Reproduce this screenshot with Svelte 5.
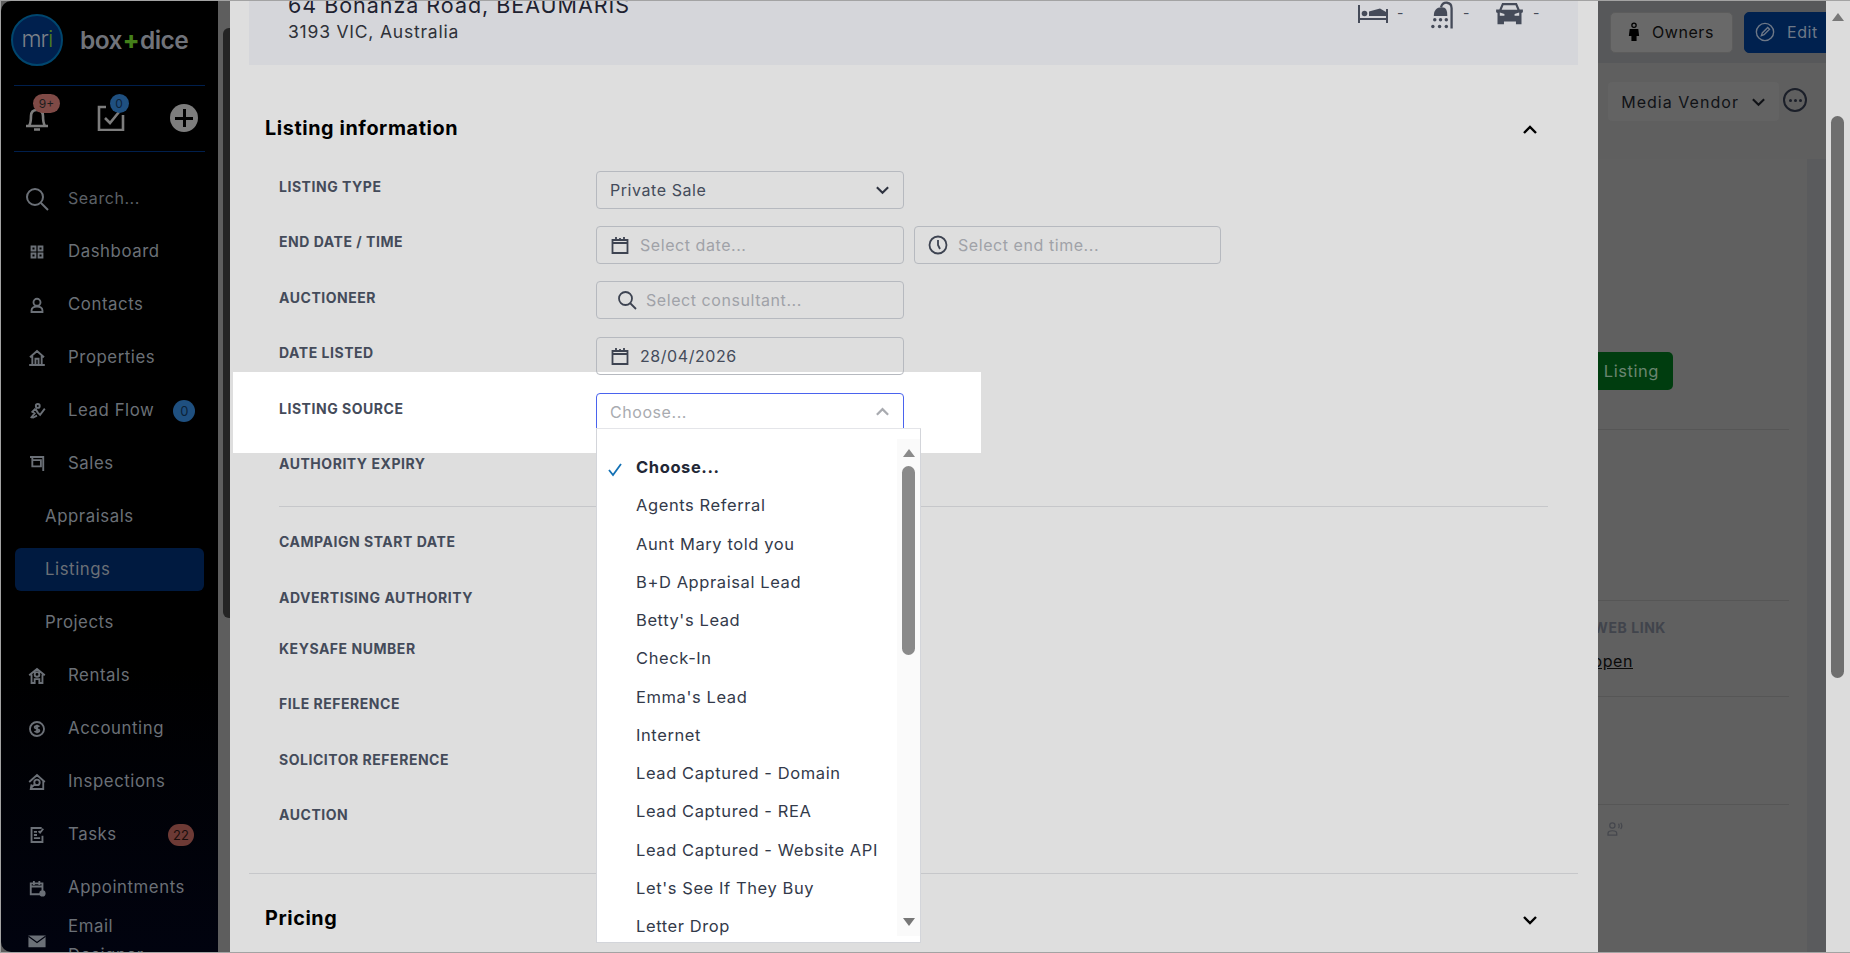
<script lang="ts">
	const nav = [
		{ label: 'Dashboard', d: 'M5 5h5v5H5zM14 5h5v5h-5zM5 14h5v5H5zM14 14h5v5h-5z' },
		{ label: 'Contacts', d: 'M12 4a4.5 4.5 0 1 0 0 9 4.5 4.5 0 0 0 0-9zM5 21v-2c0-3 3-5 7-5s7 2 7 5v2z' },
		{ label: 'Properties', d: 'M3 11l9-8 9 8M6 9.500V21h12V9.500M10 21v-8h4v8M2 21h20' },
		{ label: 'Lead Flow', d: 'M13 3a2.500 2.500 0 1 0 0 5 2.500 2.500 0 0 0 0-5zM10 9l-4 4 3 2-5 6M10 9l3 5 3 3 6-8M6 21l6-3', badge: '0', tone: 'blue' },
		{ label: 'Sales', d: 'M3 3h17v18M6 7h11v8H6zM6 7V4', wide: true },
		{ label: 'Appraisals', sub: true },
		{ label: 'Listings', sub: true, active: true },
		{ label: 'Projects', sub: true },
		{ label: 'Rentals', d: 'M2 11l10-8 10 8M5 10v11h4v-5h6v5h4V10M12 7a3 3 0 1 0 0 6 3 3 0 0 0 0-6z' },
		{ label: 'Accounting', d: 'M12 3a9 9 0 1 0 0 18 9 9 0 0 0 0-18zM15 9c-1-1.500-6-1.500-6 .8 0 2.700 6 1.400 6 4.200 0 2.300-5 2.300-6 .5M12 6.500v11' },
		{ label: 'Inspections', d: 'M2 12l10-9 10 9M5 15l-1 6h16v-11M12 9a3.500 3.500 0 1 0 0 7 3.500 3.500 0 0 0 0-7zM9 15l-4 4' },
		{ label: 'Tasks', d: 'M18 3H5v18h14v-8M8 8h4M8 12h4M8 16h8M14 7l2 2 4-5', badge: '22', tone: 'red' },
		{ label: 'Appointments', d: 'M4 6h15v14H4zM4 10h15M8 3v5M15 3v5', dot: true },
		{ label: 'Email Designer', mail: true }
	];
	const options = [
		'Agents Referral', 'Aunt Mary told you', 'B+D Appraisal Lead', "Betty's Lead", 'Check-In', "Emma's Lead",
		'Internet', 'Lead Captured - Domain', 'Lead Captured - REA', 'Lead Captured - Website API', "Let's See If They Buy", 'Letter Drop'
	];
	const lowerRows = ['Campaign start date', 'Advertising authority', 'Keysafe number', 'File reference', 'Solicitor reference', 'Auction'];
</script>

{#snippet calendar()}
	<svg class="field-icon" viewBox="0 0 20 20"><path d="M2.500 5h15v13h-15zM2.500 8h15M6 2v4M14 2v4M10 3v2" /></svg>
{/snippet}

<div class="app">
	<aside class="side">
		<div class="rail">
			<div class="brand">
				<div class="logo">m<span class="logo-r">r</span><span class="logo-i">i</span></div>
				<div class="word">box<b>+</b>dice</div>
			</div>
			<div class="quick">
				<div class="quick-item">
					<svg viewBox="0 0 28 28"><path d="M3 23h22M6 23c2-3 2-5 2-10 0-4 2-6 6-6s6 2 6 6c0 5 0 7 2 10M11 26.500h6" /></svg>
					<span class="q-badge red">9+</span>
				</div>
				<div class="quick-item task">
					<svg viewBox="0 0 28 28"><path d="M9 4H2v23h24V12M8 15l5 5 9-11" /></svg>
					<span class="q-badge blue">0</span>
				</div>
				<div class="plus"><span></span></div>
			</div>
			<nav class="nav">
				<div class="item search">
					<svg viewBox="0 0 24 24"><circle cx="10" cy="10" r="8" /><path d="M16 16l7 7" /></svg>
					<span class="muted">Search...</span>
				</div>
				{#each nav as n}
					<div class="item" class:sub={n.sub} class:active={n.active} class:mail={n.mail}>
						{#if n.d}
							<svg viewBox="0 0 24 24"><path d={n.d} />{#if n.dot}<circle class="solid" cx="19" cy="19" r="4" />{/if}</svg>
						{:else if n.mail}
							<svg viewBox="0 0 24 24"><path class="solid" d="M1 5h22v15H1z" /><path class="cut" d="M1 6l11 8 11-8" /></svg>
						{/if}
						<span class="label">{n.label}</span>
						{#if n.badge}<span class="badge {n.tone}">{n.badge}</span>{/if}
					</div>
				{/each}
			</nav>
		</div>
		<div class="side-scroll"><i></i></div>
	</aside>

	<main class="page">
		<header class="topbar">
			<button class="btn owners">
				<svg viewBox="0 0 14 24"><circle cx="7" cy="3.500" r="2.500" fill="none" stroke="#000" stroke-width="1.500" /><path d="M2 8h10l1 8h-3v6H4v-6H1z" fill="#000" /></svg>
				Owners
			</button>
			<button class="btn edit">
				<svg viewBox="0 0 22 22"><circle cx="11" cy="11" r="9.500" /><path d="M7 15l1-3 6-6 2 2-6 6z" /></svg>
				Edit
			</button>
		</header>
		<div class="tools">
			<div class="vendor">Media Vendor <svg viewBox="0 0 16 10"><path d="M2 2l6 6 6-6" /></svg></div>
			<div class="dots"><i></i><i></i><i></i></div>
		</div>
		<div class="gutter">
			<div class="sheet">
				<div class="listing-btn">Listing</div>
				<div class="web">
					<div class="web-title">WEB LINK</div>
					<div class="open">open</div>
				</div>
				<div class="gap-one"></div>
				<div class="sheet-icons">
					<svg viewBox="0 0 16 16"><circle cx="8" cy="8" r="6.500" /></svg>
					<svg viewBox="0 0 18 16"><circle cx="6" cy="4" r="3" /><path d="M1 15v-2c0-2 2-3 5-3s5 1 5 3v2zM13 2c1 1 1 4 0 5M15.500 1c1.500 2 1.500 5 0 7" /></svg>
				</div>
			</div>
		</div>
	</main>
	<div class="page-scroll"><span class="up"></span><i></i></div>

	<section class="modal">
		<div class="spot"></div>
		<div class="summary">
			<div>
				<div class="street">64 Bonanza Road, BEAUMARIS</div>
				<div class="suburb">3193 VIC, Australia</div>
			</div>
			<div class="specs">
				<svg class="bed" viewBox="0 0 30 18"><path class="fill" d="M0 0h2v18H0zM28 4h2v14h-2zM1 13h28v2H1zM11 6.500l11-3 6 3.500v4H11z" /><circle class="fill" cx="6.500" cy="8.500" r="2.800" /></svg><span>-</span>
				<svg class="shower" viewBox="0 0 26 28"><path class="line" d="M23.500 28V7c0-7-9-8-11-1" /><path class="fill" d="M5 15c0-6 3-9 8-9s6 3 6 9z" /><g class="fill"><circle cx="6" cy="19" r="1.800" /><circle cx="12" cy="19" r="1.800" /><circle cx="18" cy="19" r="1.800" /><circle cx="4" cy="26" r="1.800" /><circle cx="11" cy="26" r="1.800" /><circle cx="18" cy="26" r="1.800" /></g></svg><span>-</span>
				<svg class="car" viewBox="0 0 30 26"><path class="fill" d="M7 1h16l3 7h3.500v3l-1.500 1v12h-6v-3H9v3H2V12L.5 11V8H4zM8.500 3.500L6.500 8.500h17l-2-5zM4.500 11.500v3.500h5v-2zM25.500 11.500v3.500h-5v-2z" fill-rule="evenodd" /></svg><span>-</span>
			</div>
		</div>

		<div class="section-head first">
			<h2>Listing information</h2>
			<svg viewBox="0 0 16 10"><path d="M2 8l6-6 6 6" /></svg>
		</div>

		<div class="rows">
			<div class="row"><span class="key">Listing type</span>
				<div class="field"><span class="val">Private Sale</span><svg class="caret" viewBox="0 0 16 10"><path d="M2 2l6 6 6-6" /></svg></div>
			</div>
			<div class="row"><span class="key">End date / time</span>
				<div class="field">{@render calendar()}<span class="hint">Select date...</span></div>
				<div class="field end">
					<svg class="field-icon" viewBox="0 0 20 20"><circle cx="10" cy="10" r="8.500" /><path d="M10 5v5l2 4" /></svg>
					<span class="hint">Select end time...</span>
				</div>
			</div>
			<div class="row"><span class="key">Auctioneer</span>
				<div class="field seek">
					<svg class="field-icon" viewBox="0 0 20 20"><circle cx="8.500" cy="8.500" r="6.500" /><path d="M13 13l6 6" /></svg>
					<span class="hint">Select consultant...</span>
				</div>
			</div>
			<div class="row"><span class="key">Date listed</span>
				<div class="field">{@render calendar()}<span class="val">28/04/2026</span></div>
			</div>
			<div class="row"><span class="key">Listing source</span>
				<div class="field focus"><span class="hint">Choose...</span><svg class="caret pale" viewBox="0 0 16 10"><path d="M2 8l6-6 6 6" /></svg></div>
			</div>
			<div class="row"><span class="key">Authority expiry</span></div>
			<hr />
			{#each lowerRows as k, i}
				<div class="row" class:short={i === 1}><span class="key">{k}</span></div>
			{/each}
		</div>

		<div class="section-head pricing">
			<h2>Pricing</h2>
			<svg viewBox="0 0 16 10"><path d="M2 2l6 6 6-6" /></svg>
		</div>

		<div class="menu">
			<ul>
				<li class="picked">
					<svg viewBox="0 0 16 16"><path d="M2 9l4 5 8-11" /></svg>
					Choose...
				</li>
				{#each options as o}<li>{o}</li>{/each}
			</ul>
			<div class="menu-scroll">
				<span class="up"></span>
				<i></i>
				<span class="down"></span>
			</div>
		</div>
	</section>
</div>

<style>
:global(body) { margin: 0; background: #dcdcdc; }
.app {
	position: relative;
	display: flex;
	width: 1850px;
	height: 953px;
	overflow: hidden;
	font-family: Inter, "Open Sans", sans-serif;
	font-size: 16px;
	letter-spacing: 0.035em;
	box-sizing: border-box;
	border: 1px solid #a3a3a3;
	border-width: 1px 0 1px 1px;
}
svg { fill: none; stroke: currentColor; stroke-width: 2; flex-shrink: 0; }
button { font: inherit; letter-spacing: inherit; }

/* sidebar */
.side { display: flex; width: 229px; flex-shrink: 0; background: #5e5e5e; }
.rail {
	width: 217px;
	background: linear-gradient(#000 70%, #01030f);
	border-radius: 10px 0 0 10px;
	color: #6b7077;
	overflow: hidden;
}
.side-scroll { flex: 1; padding: 27px 0 0 5px; }
.side-scroll i { display: block; height: 590px; background: #242424; border-radius: 6px 0 0 6px; }
.brand {
	display: flex;
	align-items: center;
	gap: 17px;
	height: 85px;
	margin: 0 13px;
	padding-bottom: 7px;
	box-sizing: border-box;
	border-bottom: 1px solid #001f4d;
}
.logo {
	width: 52px;
	height: 52px;
	border-radius: 50%;
	background: #00204e;
	border: 2px solid #00466e;
	box-sizing: border-box;
	margin-left: -3px;
	color: #7b8088;
	font-size: 23px;
	font-weight: 300;
	letter-spacing: -1px;
	line-height: 46px;
	text-align: center;
	flex-shrink: 0;
}
.logo-i { color: #4f7f1e; }
.word { color: #70737a; font-size: 24.500px; font-weight: 600; letter-spacing: -0.6px; white-space: nowrap; }
.word b { color: #44801a; font-weight: 800; margin: 0 1px; }
.quick {
	display: flex;
	align-items: center;
	justify-content: space-between;
	height: 65px;
	margin: 0 13px;
	padding: 0 7px 0 9px;
	border-bottom: 1px solid #001f4d;
}
.quick-item { position: relative; width: 28px; height: 28px; color: #7d7d7d; margin-top: -3px; }
.quick-item svg { width: 28px; height: 28px; display: block; stroke-width: 2.600; }
.q-badge {
	position: absolute;
	top: -9px;
	height: 19px;
	line-height: 19px;
	text-align: center;
	font-size: 12px;
	letter-spacing: 0;
	color: #1d1d1d;
}
.q-badge.red { left: 10px; width: 27px; border-radius: 10px; background: #7f4a46; }
.q-badge.blue { left: 13px; width: 19px; border-radius: 50%; background: #1f5080; color: #0e2238; }
.plus { position: relative; width: 28px; height: 28px; border-radius: 50%; background: #7d7d7d; margin-top: -2px; }
.plus::before, .plus span {
	content: '';
	position: absolute;
	left: 13px;
	top: 5px;
	width: 3px;
	height: 18px;
	background: #000;
}
.plus span { left: 5px; top: 13px; width: 18px; height: 3px; }
.nav { padding: 20px 14px 0 13px; font-size: 16.800px; }
.item {
	display: flex;
	align-items: center;
	gap: 19px;
	min-height: 53px;
	padding: 0 10px 0 11px;
	line-height: 29px;
	box-sizing: border-box;
}
.item svg { width: 24px; height: 24px; stroke-width: 2.400; transform: scale(0.78); }
.item.search svg { transform: none; stroke-width: 2; }
.item .solid { fill: currentColor; stroke: none; }
.item .cut { stroke: #01030f; stroke-width: 1.500; }
.item .label { flex: 1; white-space: nowrap; }
.mail { margin-top: -2px; }
.item.mail .label { max-width: 90px; white-space: normal; }
.muted { color: #5c6067; font-size: 16px; }
.sub { padding-left: 31px; }
.active { min-height: 43px; margin: 5px 0 5px 1px; padding-left: 30px; background: #001a40; border-radius: 6px; }
.badge {
	min-width: 22px;
	height: 22px;
	border-radius: 11px;
	text-align: center;
	font-size: 13px;
	letter-spacing: 0;
	line-height: 22px;
	color: #0c2238;
}
.badge.blue { background: #1f5080; }
.badge.red { min-width: 26px; background: #6d3a35; color: #1a0e0c; }

/* page behind the dialog */
.page { flex: 1; min-width: 0; display: flex; flex-direction: column; background: #5a5b5d; overflow: hidden; }
.topbar {
	display: flex;
	justify-content: flex-end;
	align-items: center;
	gap: 11px;
	height: 62px;
	flex-shrink: 0;
	background: #57585a;
}
.btn {
	display: flex;
	align-items: center;
	gap: 12px;
	height: 41px;
	border-radius: 5px;
	padding: 0 13px;
	box-sizing: border-box;
	border: 1px solid #5c5c5c;
	background: #696969;
	color: #0c0c0c;
}
.owners { width: 123px; padding-left: 17px; }
.owners svg { width: 12px; height: 21px; stroke: none; }
.edit { width: 92px; margin-right: -10px; background: #00214f; border-color: #00214f; color: #6e7887; padding-left: 10px; }
.edit svg { width: 20px; height: 20px; stroke-width: 1.500; }
.tools {
	display: flex;
	justify-content: flex-end;
	align-items: flex-start;
	gap: 4px;
	height: 96px;
	flex-shrink: 0;
	padding: 19px 19px 0 0;
	box-sizing: border-box;
	background: #5f5f5f;
}
.vendor {
	display: flex;
	align-items: center;
	gap: 12px;
	height: 39px;
	padding: 0 13px;
	background: #636363;
	border-radius: 4px;
	color: #101216;
	letter-spacing: 0.065em;
	white-space: nowrap;
}
.vendor svg { width: 15px; height: 10px; stroke-width: 2.200; }
.dots {
	display: flex;
	align-items: center;
	justify-content: center;
	gap: 2px;
	width: 24px;
	height: 24px;
	margin-top: 6px;
	border: 2px solid #1b1f29;
	border-radius: 50%;
	box-sizing: border-box;
}
.dots i { width: 3px; height: 3px; background: #1b1f29; border-radius: 50%; }
.gutter { flex: 1; background: #5a5b5d; padding-right: 19px; }
.sheet { height: 100%; background: #606060; padding-right: 18px; }
.listing-btn {
	width: 80px;
	height: 38px;
	margin: 0 0 0 auto;
	padding-right: 14px;
	box-sizing: border-box;
	text-align: right;
	position: relative;
	top: 193px;
	right: 116px;
	background: #003d0f;
	border-radius: 0 5px 5px 0;
	color: #6a8570;
	font-size: 16.500px;
	line-height: 38px;
}
.web {
	margin-top: 232px;
	height: 266px;
	border-top: 1px solid #565656;
	position: relative;
}
.web::after {
	content: '';
	position: absolute;
	left: 0;
	right: 0;
	top: 170px;
	border-top: 1px solid #565656;
}
.web-title {
	position: absolute;
	top: 189px;
	right: 123px;
	color: #41444c;
	font-size: 14px;
	font-weight: 700;
	white-space: nowrap;
}
.open {
	position: absolute;
	top: 221px;
	right: 156px;
	color: #0a0a0a;
	text-decoration: underline;
}
.gap-one { height: 107px; border-top: 1px solid #565656; }
.sheet-icons { display: flex; justify-content: flex-end; gap: 8px; border-top: 1px solid #565656; padding: 17px 166px 0 0; color: #45474d; }
.sheet-icons svg { width: 16px; height: 14px; stroke-width: 1.400; }
.page-scroll { width: 24px; flex-shrink: 0; background: #dcdcdc; padding: 0 5px; box-sizing: border-box; position: relative; }
.page-scroll .up { position: absolute; left: 6px; top: 12px; border: 6px solid transparent; border-top: 0; border-bottom: 8px solid #777; }
.page-scroll i { display: block; width: 13px; height: 562px; margin-top: 115px; background: #6e6e6e; border-radius: 7px; }

/* dialog */
.modal {
	position: absolute;
	left: 229px;
	top: -1px;
	width: 1368px;
	height: 953px;
	padding: 0 20px 0 19px;
	box-sizing: border-box;
	background: #dedede;
	overflow: hidden;
	color: #444b5a;
}
.spot { position: absolute; left: 3px; top: 372px; width: 748px; height: 81px; background: #fff; }
.summary {
	position: relative;
	display: flex;
	justify-content: space-between;
	height: 65px;
	padding: 0 13px 0 39px;
	box-sizing: border-box;
	background: #d5d6da;
}
.street { margin-top: -6px; font-size: 21.500px; line-height: 22px; letter-spacing: 0.045em; color: #1e2230; white-space: nowrap; }
.suburb { margin-top: 4px; font-size: 17.500px; line-height: 24px; letter-spacing: 0.045em; color: #2e3138; }
.specs { display: flex; align-items: flex-start; padding-top: 1px; color: #454b59; }
.specs span { font-size: 14px; margin: 3px 0 0 9px; width: 32px; }
.specs .fill { fill: #454b59; stroke: none; }
.specs .line { stroke: #454b59; stroke-width: 2.400; }
.bed { width: 30px; height: 18px; margin-top: 4px; }
.shower { width: 25px; height: 28px; }
.car { width: 29px; height: 24px; margin-top: 1px; }
.section-head {
	position: relative;
	display: flex;
	align-items: center;
	justify-content: space-between;
	height: 26px;
	padding: 0 40px 0 16px;
	color: #000;
}
.section-head h2 { margin: 0; font-size: 19.800px; font-weight: 700; letter-spacing: 0.03em; }
.section-head svg { width: 16px; height: 10px; stroke-width: 2.400; margin-top: 3px; }
.first { margin: 50px 0 30px; }
.pricing { margin-top: 31px; }
.rows { position: relative; padding: 0 30px; border-bottom: 1px solid #c6c7ca; height: 703px; box-sizing: border-box; }
.row { display: flex; align-items: flex-start; height: 55.400px; }
.row.short { height: 51px; }
.key {
	width: 317px;
	flex-shrink: 0;
	padding-top: 8px;
	font-size: 14px;
	font-weight: 700;
	letter-spacing: 0.038em;
	line-height: 16px;
	text-transform: uppercase;
}
.field {
	display: flex;
	align-items: center;
	gap: 10px;
	width: 308px;
	height: 38px;
	padding: 0 13px;
	box-sizing: border-box;
	border: 1px solid #b6b9bf;
	border-radius: 4px;
	color: #444b5a;
}
.field.end { margin-left: 10px; width: 307px; }
.field.seek { padding-left: 20px; gap: 9px; margin-top: -1px; }
.field.focus { border-color: #4a63ee; height: 44px; padding-bottom: 6px; }
.field-icon { width: 20px; height: 20px; stroke-width: 1.800; color: #3d4351; }
.val { flex: 1; }
.hint { flex: 1; color: #a0a2a8; }
.focus .hint { color: #a9abb0; }
.caret { width: 15px; height: 10px; stroke-width: 2.200; color: #2e3340; }
.caret.pale { color: #a9abb0; stroke-width: 2.400; }
hr { height: 1px; margin: 3px 0 19px; border: 0; background: #c6c7ca; }

/* open select list */
.menu {
	position: absolute;
	left: 366px;
	top: 428px;
	width: 325px;
	height: 515px;
	display: flex;
	background: #fff;
	border: 1px solid #d3d5da;
	border-top-color: #e4e5e9;
	box-sizing: border-box;
}
.menu ul { flex: 1; min-width: 0; margin: 0; padding: 19px 0 0 39px; list-style: none; color: #333a4a; font-size: 16.500px; letter-spacing: 0.036em; overflow: hidden; }
.menu li { position: relative; height: 38.250px; line-height: 38.250px; white-space: nowrap; }
.picked { font-weight: 700; color: #222736; }
.picked svg {
	position: absolute;
	left: -29px;
	top: 13px;
	width: 16px;
	height: 16px;
	color: #1371b5;
	stroke-width: 1.800;
}
.menu-scroll {
	position: relative;
	width: 23px;
	margin: 10px 0 6px;
	background: #fafafa;
}
.menu-scroll i { position: absolute; left: 5px; top: 27px; width: 13px; height: 189px; border-radius: 7px; background: #8a8a8a; }
.menu-scroll .up, .menu-scroll .down { position: absolute; left: 6px; border: 6px solid transparent; }
.menu-scroll .up { top: 10px; border-top: 0; border-bottom: 8px solid #8a8a8a; }
.menu-scroll .down { bottom: 10px; border-bottom: 0; border-top: 8px solid #777; }
</style>
